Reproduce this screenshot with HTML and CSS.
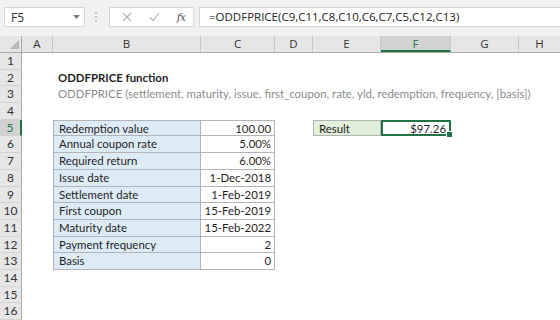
FILE: index.html
```html
<!DOCTYPE html>
<html lang="en">
<head>
  <meta charset="UTF-8">
  <title>ODDFPRICE function</title>
  <link rel="stylesheet" href="styles.css">
</head>
<body>
  <div class="toolbar">
    <div class="namebox">
      <span>F5</span>
      <svg class="caret" width="7" height="4" viewBox="0 0 7 4"><path d="M0 0h7L3.5 4z" fill="#7a7a7a"/></svg>
    </div>
    <div class="grip"><i></i><i></i><i></i></div>
    <div class="fbuttons">
      <svg width="10" height="10" viewBox="0 0 10 10"><path d="M1 1l8 8M9 1l-8 8" stroke="#b4b4b4" stroke-width="1.2"/></svg>
      <svg width="11" height="10" viewBox="0 0 11 10"><path d="M1 5.5l3 3 6-7.5" stroke="#b4b4b4" stroke-width="1.2" fill="none"/></svg>
      <span class="fx">fx</span>
    </div>
    <div class="formula">=ODDFPRICE(C9,C11,C8,C10,C6,C7,C5,C12,C13)</div>
  </div>

  <div class="sheet">
    <div class="row head">
      <div class="rh corner"><svg width="9" height="9" viewBox="0 0 9 9"><path d="M9 0v9H0z" fill="#b8b8b8"/></svg></div>
      <div class="ch a">A</div>
      <div class="ch b">B</div>
      <div class="ch c">C</div>
      <div class="ch d">D</div>
      <div class="ch e">E</div>
      <div class="ch f sel">F</div>
      <div class="ch g">G</div>
      <div class="ch h">H</div>
    </div>

    <div class="row"><div class="rh">1</div></div>
    <div class="row"><div class="rh">2</div><div class="a"></div><div class="title">ODDFPRICE function</div></div>
    <div class="row"><div class="rh">3</div><div class="a"></div><div class="syntax">ODDFPRICE (settlement, maturity, issue, first_coupon, rate, yld, redemption, frequency, [basis])</div></div>
    <div class="row"><div class="rh">4</div></div>
    <div class="row">
      <div class="rh sel">5</div><div class="a"></div>
      <div class="b lbl top">Redemption value</div><div class="c val top">100.00</div>
      <div class="d"></div>
      <div class="e res">Result</div><div class="f active">$97.26<span class="handle"></span></div>
    </div>
    <div class="row"><div class="rh">6</div><div class="a"></div><div class="b lbl">Annual coupon rate</div><div class="c val">5.00%</div></div>
    <div class="row"><div class="rh">7</div><div class="a"></div><div class="b lbl">Required return</div><div class="c val">6.00%</div></div>
    <div class="row"><div class="rh">8</div><div class="a"></div><div class="b lbl">Issue date</div><div class="c val">1-Dec-2018</div></div>
    <div class="row"><div class="rh">9</div><div class="a"></div><div class="b lbl">Settlement date</div><div class="c val">1-Feb-2019</div></div>
    <div class="row"><div class="rh">10</div><div class="a"></div><div class="b lbl">First coupon</div><div class="c val">15-Feb-2019</div></div>
    <div class="row"><div class="rh">11</div><div class="a"></div><div class="b lbl">Maturity date</div><div class="c val">15-Feb-2022</div></div>
    <div class="row"><div class="rh">12</div><div class="a"></div><div class="b lbl">Payment frequency</div><div class="c val">2</div></div>
    <div class="row"><div class="rh">13</div><div class="a"></div><div class="b lbl">Basis</div><div class="c val">0</div></div>
    <div class="row"><div class="rh">14</div></div>
    <div class="row"><div class="rh">15</div></div>
    <div class="row"><div class="rh">16</div></div>
  </div>
</body>
</html>
```

FILE: styles.css
```css
body {
  margin: 0;
  width: 560px;
  height: 320px;
  overflow: hidden;
  background: #ffffff;
  font-family: 'Lato', 'Open Sans', sans-serif;
  color: #1f1f1f;
}

/* formula bar */
.toolbar {
  display: flex;
  align-items: center;
  height: 36px;
  padding: 0 0 2px 4px;
  background: #f1f1f1;
  box-sizing: border-box;
}

.namebox {
  display: flex;
  align-items: center;
  justify-content: space-between;
  width: 81px;
  height: 20px;
  padding: 0 4px 0 6px;
  box-sizing: border-box;
  background: #ffffff;
  border: 1px solid #d6d6d6;
  font-family: 'Open Sans', sans-serif;
  font-size: 12px;
  color: #333;
}

.grip {
  display: flex;
  flex-direction: column;
  gap: 2px;
  margin: 0 12px 0 10px;
}

.grip i {
  width: 2px;
  height: 2px;
  background: #c4c4c4;
}

.fbuttons {
  display: flex;
  align-items: center;
  justify-content: space-between;
  width: 85px;
  height: 20px;
  padding: 0 8px 0 12px;
  box-sizing: border-box;
  background: #ffffff;
  border: 1px solid #d6d6d6;
}

.fx {
  font-family: 'DejaVu Serif', serif;
  font-style: italic;
  font-size: 11px;
  color: #555;
  letter-spacing: -1px;
}

.formula {
  flex: 1;
  height: 20px;
  margin-left: 5px;
  padding-left: 9px;
  box-sizing: border-box;
  background: #ffffff;
  border: 1px solid #d6d6d6;
  border-right: none;
  font-family: 'Open Sans', sans-serif;
  font-size: 11.5px;
  line-height: 18px;
  color: #222;
}

/* grid */
.row {
  display: flex;
  height: 16.7px;
  font-size: 11.4px;
}

.row.head {
  height: 17px;
  background: #e6e6e6;
  border-bottom: 1px solid #ababab;
  box-sizing: border-box;
}

.rh {
  flex: none;
  width: 22px;
  background: #e6e6e6;
  border-right: 1px solid #ababab;
  border-bottom: 1px solid #d2d2d2;
  box-sizing: border-box;
  text-align: center;
  font-size: 12px;
  line-height: 16px;
  color: #333;
}

.rh.sel {
  background: #d2d2d2;
  border-right: 2px solid #217346;
  color: #217346;
}

.rh.corner {
  display: flex;
  align-items: flex-end;
  justify-content: flex-end;
  padding: 0 2px 3px 0;
  border-bottom: none;
}

.ch {
  flex: none;
  box-sizing: border-box;
  border-right: 1px solid #c8c8c8;
  text-align: center;
  font-family: 'Open Sans', sans-serif;
  font-size: 11.5px;
  line-height: 16px;
  color: #333;
}

.ch.sel {
  background: #d2d2d2;
  border-bottom: 2px solid #217346;
  color: #217346;
}

.a { flex: none; width: 31px; }
.b { flex: none; width: 148px; }
.c { flex: none; width: 74px; }
.d { flex: none; width: 38px; }
.e { flex: none; width: 68px; }
.f { flex: none; width: 70px; }
.g { flex: none; width: 68px; }
.h { flex: 1; border-right: none; }

.title {
  padding-left: 5px;
  font-weight: bold;
  line-height: 16px;
}

.syntax {
  padding-left: 5px;
  white-space: nowrap;
  color: #8c8c8c;
  line-height: 16px;
}

.lbl,
.val,
.res,
.active {
  box-sizing: border-box;
  line-height: 16px;
  white-space: nowrap;
}

.lbl {
  padding-left: 5px;
  background: #ddebf7;
  border: 1px solid #b4b4b4;
  border-top: none;
}

.val {
  padding-right: 3px;
  text-align: right;
  border-bottom: 1px solid #b4b4b4;
  border-right: 1px solid #b4b4b4;
}

.top {
  border-top: 1px solid #b4b4b4;
}

.res {
  padding-left: 5px;
  background: #e2efda;
  border: 1px solid #b4b4b4;
}

.active {
  position: relative;
  padding-right: 3px;
  text-align: right;
  border: 2px solid #217346;
  line-height: 14px;
}

.handle {
  position: absolute;
  right: -4px;
  bottom: -4px;
  width: 5px;
  height: 5px;
  background: #217346;
  border: 1px solid #ffffff;
}
```
